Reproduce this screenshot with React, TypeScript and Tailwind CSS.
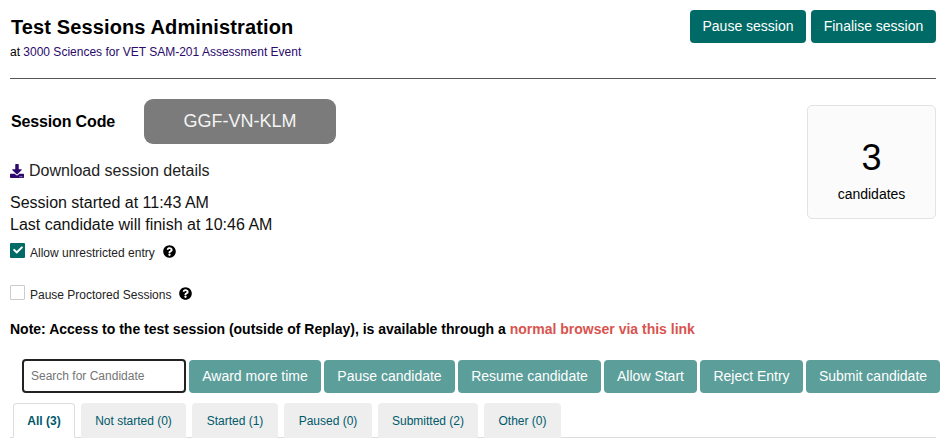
import { FaDownload, FaQuestionCircle, FaCheck } from 'react-icons/fa'

const actions = [
  { label: 'Award more time', width: 'w-[132px]' },
  { label: 'Pause candidate', width: 'w-[131px]' },
  { label: 'Resume candidate', width: 'w-[143px]' },
  { label: 'Allow Start', width: 'w-[93px]' },
  { label: 'Reject Entry', width: 'w-[103px]' },
  { label: 'Submit candidate', width: 'w-[134px]' },
]

const tabs = [
  { label: 'All (3)', width: 'w-[62px]', active: true },
  { label: 'Not started (0)', width: 'w-[105px]' },
  { label: 'Started (1)', width: 'w-[86px]' },
  { label: 'Paused (0)', width: 'w-[88px]' },
  { label: 'Submitted (2)', width: 'w-[100px]' },
  { label: 'Other (0)', width: 'w-[77px]' },
]

export default function App() {
  return (
    <div className="h-[441px] w-[947px] overflow-hidden bg-white pl-[10px] pr-[11px] pt-[10px] font-['Liberation_Sans',Arial,sans-serif] text-black">
      {/* Header */}
      <div className="flex h-[68px] items-start justify-between border-b border-[#555] box-content pb-0">
        <div className="pt-[6px]">
          <h1 className="ml-px text-[20px] font-bold leading-[23px] tracking-[0.12px]">Test Sessions Administration</h1>
          <p className="mt-[6px] text-[12px] leading-[14px] text-[#2a0a6b]">
            <span className="text-black">at </span>3000 Sciences for VET SAM-201 Assessment Event
          </p>
        </div>
        <div className="flex gap-[5px]">
          <button className="h-[33px] w-[116px] rounded-[4px] bg-[#006b66] text-[14px] text-white">Pause session</button>
          <button className="h-[33px] w-[125px] rounded-[4px] bg-[#006b66] text-[14px] text-white">Finalise session</button>
        </div>
      </div>

      {/* Session info */}
      <div className="flex items-start justify-between">
        <div>
          <div className="mt-[20px] flex items-center">
            <span className="ml-px w-[133px] text-[16px] font-bold tracking-[-0.15px]">Session Code</span>
            <div className="flex h-[45px] w-[192px] items-center justify-center rounded-[9px] bg-[#7b7b7b] text-[18px] text-[#f4f4f4]">
              GGF-VN-KLM
            </div>
          </div>
          <div className="mt-[18px] flex items-center text-[16px] leading-[18px] text-[#222]">
            <FaDownload className="mr-[5px] h-[14px] w-[14px] text-[#2e0a6e]" />
            Download session details
          </div>
          <div className="mt-[12px] text-[16px] leading-[22px] text-[#111]">
            <p>Session started at 11:43 AM</p>
            <p>Last candidate will finish at 10:46 AM</p>
          </div>
          <div className="mt-[6px] flex h-[16px] items-center text-[12px]">
            <span className="flex h-[15px] w-[15px] items-center justify-center rounded-[1px] bg-[#006b66] text-white">
              <FaCheck className="h-[10px] w-[10px]" />
            </span>
            <span className="ml-[5px] mt-[6px] text-[#222]">Allow unrestricted entry</span>
            <FaQuestionCircle className="ml-[8px] mt-[2px] h-[13px] w-[13px]" />
          </div>
          <div className="mt-[26px] flex h-[16px] items-center text-[12px]">
            <span className="h-[15px] w-[15px] rounded-[1px] border border-[#ccc] bg-white" />
            <span className="ml-[5px] mt-[6px] text-[#222]">Pause Proctored Sessions</span>
            <FaQuestionCircle className="ml-[8px] mt-[2px] h-[13px] w-[13px]" />
          </div>
          <p className="mt-[21px] whitespace-nowrap text-[14px] font-bold leading-[16px]">
            Note: Access to the test session (outside of Replay), is available through a{' '}
            <span className="text-[#d9534f]">normal browser via this link</span>
          </p>
        </div>
        <div className="mt-[26px] flex h-[114px] w-[129px] flex-col items-center rounded-[5px] border border-[#e3e3e3] bg-[#fbfbfb]">
          <span className="mt-[32px] text-[36px] leading-[40px]">3</span>
          <span className="mt-[8px] text-[14px] leading-[16px]">candidates</span>
        </div>
      </div>

      {/* Candidate actions */}
      <div className="-mr-[4px] ml-[12px] mt-[22px] flex items-center gap-[3px]">
        <input
          placeholder="Search for Candidate"
          className="h-[34px] w-[164px] rounded-[4px] border-2 border-[#222] bg-white px-[7px] text-[12px] outline-none placeholder:text-[#757575]"
        />
        {actions.map((action) => (
          <button
            key={action.label}
            className={`h-[33px] rounded-[4px] bg-[#5b9e9a] text-[14px] text-white ${action.width}`}
          >
            {action.label}
          </button>
        ))}
      </div>

      {/* Tabs */}
      <div className="mt-[10px] flex gap-[6px] border-b border-[#ddd] pl-[3px]">
        {tabs.map((tab) => (
          <div
            key={tab.label}
            className={`-mb-px flex h-[35px] items-center justify-center rounded-t-[4px] text-[12px] text-[#00596b] ${tab.width} ${
              tab.active ? 'border border-b-white border-[#ddd] bg-white font-bold' : 'bg-[#eee]'
            }`}
          >
            {tab.label}
          </div>
        ))}
      </div>
    </div>
  )
}
